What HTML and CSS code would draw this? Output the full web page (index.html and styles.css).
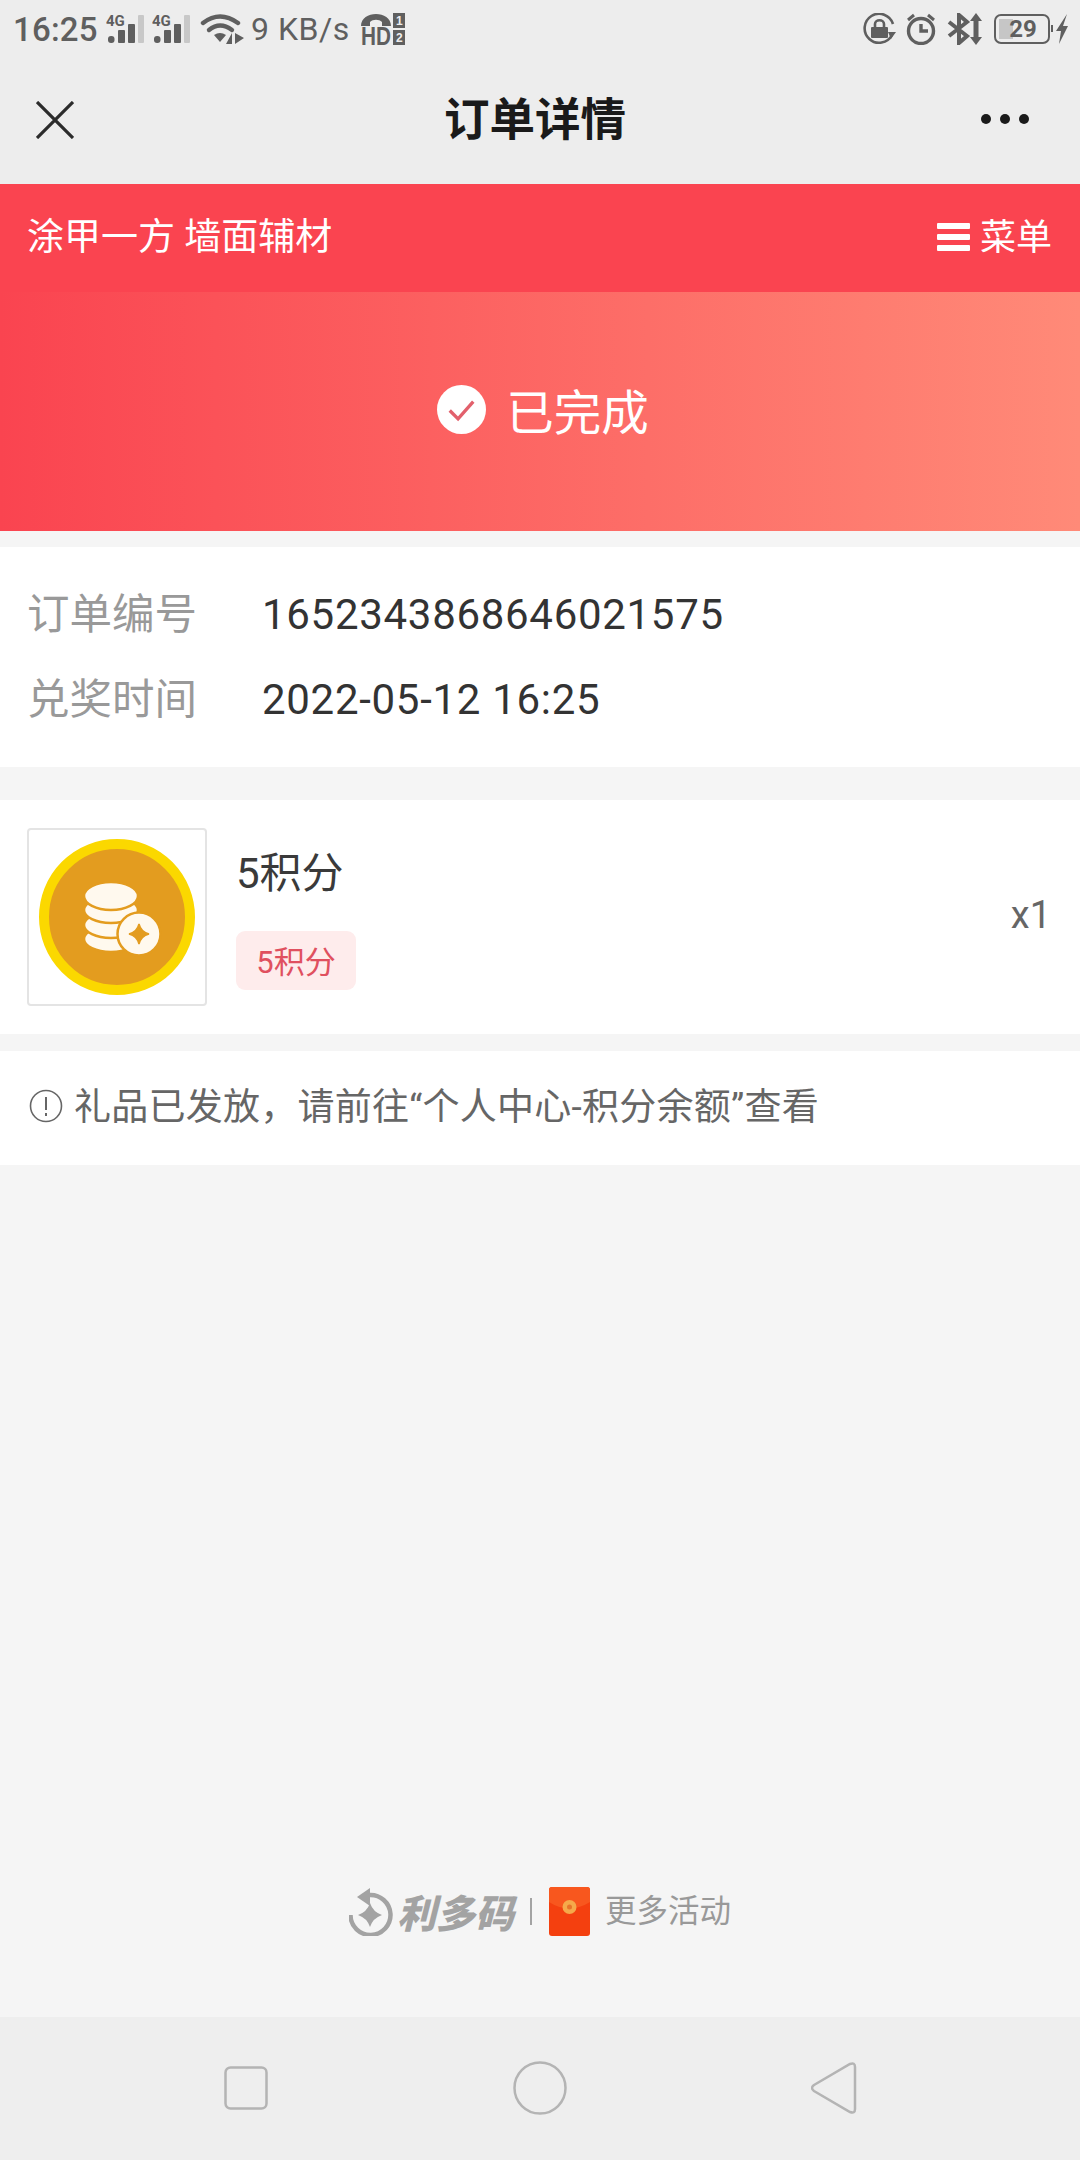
FILE: index.html
```html
<!DOCTYPE html>
<html lang="zh">
<head>
<meta charset="utf-8">
<title>订单详情</title>
<link rel="stylesheet" href="styles.css">
</head>
<body>
<div class="page">
  <header class="status">
    <div class="status-group">
      <span class="time">16:25</span>
      <svg class="sig" viewBox="0 -6 38 36"><rect x="2" y="22" width="6.5" height="7" rx="3" fill="#5f5f5f"/><rect x="12" y="16" width="7" height="13" rx="1" fill="#5f5f5f"/><rect x="22" y="10" width="7" height="19" rx="1" fill="#5f5f5f"/><rect x="32" y="1" width="6" height="28" rx="1" fill="#c8c8c8"/><text x="0" y="12" class="sig-text">4G</text></svg>
      <svg class="sig sig-2" viewBox="0 -6 38 36"><rect x="2" y="22" width="6.5" height="7" rx="3" fill="#5f5f5f"/><rect x="12" y="16" width="7" height="13" rx="1" fill="#5f5f5f"/><rect x="22" y="10" width="7" height="19" rx="1" fill="#5f5f5f"/><rect x="32" y="1" width="6" height="28" rx="1" fill="#c8c8c8"/><text x="0" y="12" class="sig-text">4G</text></svg>
      <svg class="wifi" viewBox="0 0 44 32"><g fill="none" stroke="#5f5f5f" stroke-width="4.4" stroke-linecap="round"><path d="M3 10Q20 -3 38 10"/><path d="M9 17Q20 8 32 17"/></g><path d="M14 22Q20 18 26 22L20 29Z" fill="#5f5f5f"/><path d="M32 20V31H26ZM35 20V31L44 25Z" fill="#5f5f5f"/></svg>
      <span class="speed">9 KB/s</span>
      <svg class="hd" viewBox="0 0 45 40"><path d="M0 13C0 -3 30 -3 30 13H21V9C18 6 12 6 9 9V13Z" fill="#5f5f5f"/><text x="0" y="32" class="hd-text" textLength="30" lengthAdjust="spacingAndGlyphs">HD</text><rect x="32" y="0" width="12" height="15" fill="#5f5f5f"/><rect x="32" y="17" width="12" height="15" fill="#5f5f5f"/><text x="35" y="12" class="hd-num">1</text><text x="35" y="29" class="hd-num">2</text></svg>
    </div>
    <div class="status-group status-right">
      <svg class="s-icon" viewBox="0 0 33 32"><path d="M29 22A14.5 14.5 0 1 1 30 11" fill="none" stroke="#5f5f5f" stroke-width="2.6"/><path d="M28 26L33 19L25 19Z" fill="#5f5f5f"/><rect x="8" y="14" width="17" height="11" rx="1" fill="#5f5f5f"/><path d="M12 14V11C12 6 21 6 21 11V14" fill="none" stroke="#5f5f5f" stroke-width="2.6"/></svg>
      <svg class="s-alarm" viewBox="0 0 30 32"><circle cx="15" cy="18" r="12.5" fill="none" stroke="#5f5f5f" stroke-width="3.4"/><path d="M15 11V18H22" fill="none" stroke="#5f5f5f" stroke-width="3.4"/><path d="M2 7L8 2M28 7L22 2" stroke="#5f5f5f" stroke-width="3"/></svg>
      <svg class="s-bt" viewBox="0 0 35 32"><path d="M2 9L20 23L12 30V2L20 9L2 23" fill="none" stroke="#5f5f5f" stroke-width="4"/><path d="M29 0L35 8H31.5V24H35L29 32L23 24H26.5V8H23Z" fill="#5f5f5f"/></svg>
      <div class="battery"><span class="batt-fill"></span><span class="batt-num">29</span></div>
      <svg class="s-charge" viewBox="0 0 18 32"><rect x="0" y="12" width="2" height="7" fill="#5f5f5f"/><path d="M16 1L5 18H10L8 31L17 13H12Z" fill="#5f5f5f"/></svg>
    </div>
  </header>

  <nav class="topbar">
    <svg class="close" viewBox="0 0 38 38"><path d="M1 1L37 37M37 1L1 37" stroke="#2b2b2b" stroke-width="3.2"/></svg>
    <h1 class="title">订单详情</h1>
    <div class="dots"><i></i><i></i><i></i></div>
  </nav>

  <div class="shop">
    <span class="shop-text">涂甲一方 墙面辅材</span>
    <div class="menu"><span class="bars"><i></i><i></i><i></i></span><span class="shop-text">菜单</span></div>
  </div>

  <div class="banner">
    <svg class="check" viewBox="0 0 50 50"><circle cx="25" cy="25" r="25" fill="#fff"/><path d="M13 26L21.5 34.5L37 17" fill="none" stroke="#e2606c" stroke-width="3.4"/></svg>
    <span class="banner-text">已完成</span>
  </div>

  <section class="info">
    <div class="info-row"><span class="info-label">订单编号</span><span class="info-value">1652343868646021575</span></div>
    <div class="info-row"><span class="info-label">兑奖时间</span><span class="info-value">2022-05-12 16:25</span></div>
  </section>

  <section class="item">
    <div class="thumb">
      <svg class="coin" viewBox="0 0 156 156">
        <circle cx="78" cy="78" r="73" fill="#e39c1f" stroke="#fbd800" stroke-width="10"/>
        <g fill="#fff9ee" stroke="#e39c1f" stroke-width="2.5">
          <ellipse cx="72" cy="100" rx="27" ry="13"/>
          <ellipse cx="72" cy="86" rx="27" ry="13"/>
          <ellipse cx="72" cy="71" rx="27" ry="13"/>
          <ellipse cx="72" cy="57" rx="27" ry="14"/>
          <circle cx="100" cy="95" r="21.5"/>
        </g>
        <path d="M100 85Q102 93 110 95Q102 97 100 105Q98 97 90 95Q98 93 100 85Z" fill="#e39c1f" stroke="#e39c1f" stroke-width="1.5"/>
      </svg>
    </div>
    <div class="item-body">
      <div class="item-name">5积分</div>
      <span class="tag">5积分</span>
    </div>
    <span class="qty">x1</span>
  </section>

  <section class="note">
    <svg class="note-icon" viewBox="0 0 34 34"><circle cx="17" cy="17" r="15.5" fill="none" stroke="#666" stroke-width="1.6"/><path d="M17 8V21M17 24V27" stroke="#666" stroke-width="2"/></svg>
    <span class="note-text">礼品已发放，请前往“个人中心-积分余额”查看</span>
  </section>

  <footer class="brand">
    <svg class="brand-logo" viewBox="0 0 44 48"><path d="M20 7A20 20 0 1 1 1.5 27" fill="none" stroke="#a3a3a3" stroke-width="4.5"/><path d="M8 9L21 0V18Z" fill="#a3a3a3"/><path d="M21 15Q24 24 33 27Q24 30 21 39Q18 30 9 27Q18 24 21 15Z" fill="#a3a3a3"/></svg>
    <span class="brand-name">利多码</span>
    <i class="brand-sep"></i>
    <svg class="packet" viewBox="0 0 41 49"><rect width="41" height="49" rx="3" fill="#f4400f"/><path d="M0 3Q0 0 3 0H38Q41 0 41 3V15Q20 28 0 15Z" fill="#f8571e"/><circle cx="20.5" cy="20" r="7" fill="#f5a94a"/><circle cx="20.5" cy="20" r="2.5" fill="#e8742a"/></svg>
    <span class="brand-more">更多活动</span>
  </footer>

  <div class="sysnav">
    <svg class="nav-square" viewBox="0 0 44 44"><rect x="1.5" y="1.5" width="41" height="41" rx="5" fill="none" stroke="#b4b4b4" stroke-width="2.5"/></svg>
    <svg class="nav-circle" viewBox="0 0 54 54"><circle cx="27" cy="27" r="25.5" fill="none" stroke="#b4b4b4" stroke-width="2.5"/></svg>
    <svg class="nav-back" viewBox="0 0 46 52"><path d="M3 23L39 2Q44 0 44 5V47Q44 52 39 50L3 29Q-1 26 3 23Z" fill="none" stroke="#b4b4b4" stroke-width="2.5"/></svg>
  </div>
</div>
</body>
</html>
```

FILE: styles.css
```css
* { box-sizing: border-box; margin: 0; padding: 0; }
html, body { width: 1080px; height: 2160px; overflow: hidden; }
body { font-family: Roboto, "Noto Sans CJK SC", sans-serif; background: #f5f5f5; color: #333; }
.page { width: 1080px; height: 2160px; display: flex; flex-direction: column; }

.status { height: 58px; padding: 0 11px 0 13px; background: #ededed; display: flex; justify-content: space-between; align-items: center; flex: none; color: #5f5f5f; }
.status-group { display: flex; align-items: center; }
.time { font-size: 33px; font-weight: 500; width: 93px; letter-spacing: .2px; }
.sig { width: 38px; height: 36px; margin-top: -6px; }
.sig-2 { margin-left: 8px; }
.sig-text { font: 700 15px Roboto, sans-serif; fill: #5f5f5f; }
.wifi { width: 44px; height: 32px; margin-left: 10px; }
.speed { font-size: 32px; margin-left: 7px; letter-spacing: .5px; white-space: nowrap; }
.hd { width: 45px; height: 40px; margin-left: 11px; margin-bottom: -8px; }
.hd-text { font: 700 26px "Liberation Sans", sans-serif; fill: #5f5f5f; }
.hd-num { font: 700 12px "Liberation Sans", sans-serif; fill: #ededed; }
.s-icon { width: 33px; height: 32px; }
.s-alarm { width: 30px; height: 32px; margin-left: 10px; }
.s-bt { width: 35px; height: 32px; margin-left: 11px; }
.battery { width: 56px; height: 30px; margin-left: 12px; border: 2px solid #5f5f5f; border-radius: 7px; position: relative; display: flex; align-items: center; justify-content: center; }
.batt-fill { position: absolute; left: 3px; top: 3px; bottom: 3px; width: 14px; background: #c6c6c6; }
.batt-num { position: relative; font-size: 24px; font-weight: 700; color: #5f5f5f; margin-left: 2px; }
.s-charge { width: 18px; height: 32px; margin-left: 1px; }

.topbar { height: 126px; background: #ededed; display: flex; align-items: center; justify-content: center; position: relative; flex: none; }
.close { position: absolute; left: 36px; top: 43px; width: 38px; height: 38px; }
.title { font-size: 45.5px; font-weight: 700; color: #1a1a1a; line-height: 1; margin-right: 10px; }
.dots { position: absolute; right: 51px; top: 56px; display: flex; gap: 9px; }
.dots i { width: 10px; height: 10px; border-radius: 50%; background: #1a1a1a; }

.shop { height: 108px; background: #fa4450; padding: 0 28px 0 27px; display: flex; justify-content: space-between; align-items: center; color: #fff; font-size: 37px; flex: none; }
.shop-text { margin-bottom: 8px; }
.menu { display: flex; align-items: center; gap: 10px; }
.menu .shop-text { font-size: 36px; }
.bars { display: flex; flex-direction: column; gap: 5px; width: 33px; margin-bottom: 3px; }
.bars i { height: 6px; background: #fff; border-radius: 1px; }

.banner { height: 239px; background: linear-gradient(90deg, #fa4450, #ff8a78); padding: 0 0 4px 6px; display: flex; align-items: center; justify-content: center; gap: 20px; color: #fff; flex: none; }
.check { width: 49px; height: 49px; }
.banner-text { font-size: 47.5px; }

.info { margin-top: 16px; background: #fff; padding: 25px 0 25px 27px; flex: none; }
.info-row { height: 85px; display: flex; align-items: center; }
.info-label { width: 235px; color: #999; font-size: 42.5px; margin-bottom: 8px; }
.info-value { color: #333; font-size: 42px; letter-spacing: .7px; }

.item { margin-top: 33px; height: 234px; background: #fff; padding: 0 29px 0 27px; display: flex; align-items: center; flex: none; }
.thumb { width: 180px; height: 178px; border: 2px solid #e4e4e4; border-radius: 4px; display: flex; align-items: center; justify-content: center; flex: none; }
.coin { width: 156px; height: 156px; }
.item-body { margin-left: 29px; padding-top: 45px; align-self: stretch; display: flex; flex-direction: column; align-items: flex-start; flex: 1; gap: 28px; }
.item-name { font-size: 42px; line-height: 58px; color: #3a3a3a; }
.tag { height: 59px; width: 120px; padding-bottom: 2px; background: #feecec; border-radius: 9px; color: #e0505f; font-size: 31px; display: flex; align-items: center; justify-content: center; }
.qty { font-size: 38px; color: #666; margin-bottom: 4px; }

.note { margin-top: 17px; height: 114px; background: #fff; padding: 0 0 5px 29px; display: flex; align-items: center; gap: 11px; font-size: 37px; color: #666; flex: none; }
.note-text { margin-bottom: 4px; letter-spacing: .25px; }
.note-icon { width: 34px; height: 34px; }

.brand { margin-top: auto; height: 143px; padding: 0 0 0 349px; display: flex; align-items: flex-start; flex: none; color: #a3a3a3; }
.brand-logo { width: 44px; height: 48px; margin-top: 14px; }
.brand-name { font-size: 39px; font-weight: 900; font-style: italic; margin-left: 4px; margin-top: 13px; line-height: 56px; }
.brand-sep { width: 2px; height: 27px; background: #a3a3a3; margin-left: 16px; margin-top: 24px; }
.packet { width: 41px; height: 49px; margin-left: 17px; margin-top: 13px; }
.brand-more { font-size: 31.5px; color: #999; margin-left: 15px; margin-top: 15px; line-height: 46px; }

.sysnav { height: 143px; background: #eee; position: relative; flex: none; }
.nav-square { position: absolute; left: 224px; top: 49px; width: 44px; height: 44px; }
.nav-circle { position: absolute; left: 513px; top: 44px; width: 54px; height: 54px; }
.nav-back { position: absolute; left: 811px; top: 45px; width: 46px; height: 52px; }
```
